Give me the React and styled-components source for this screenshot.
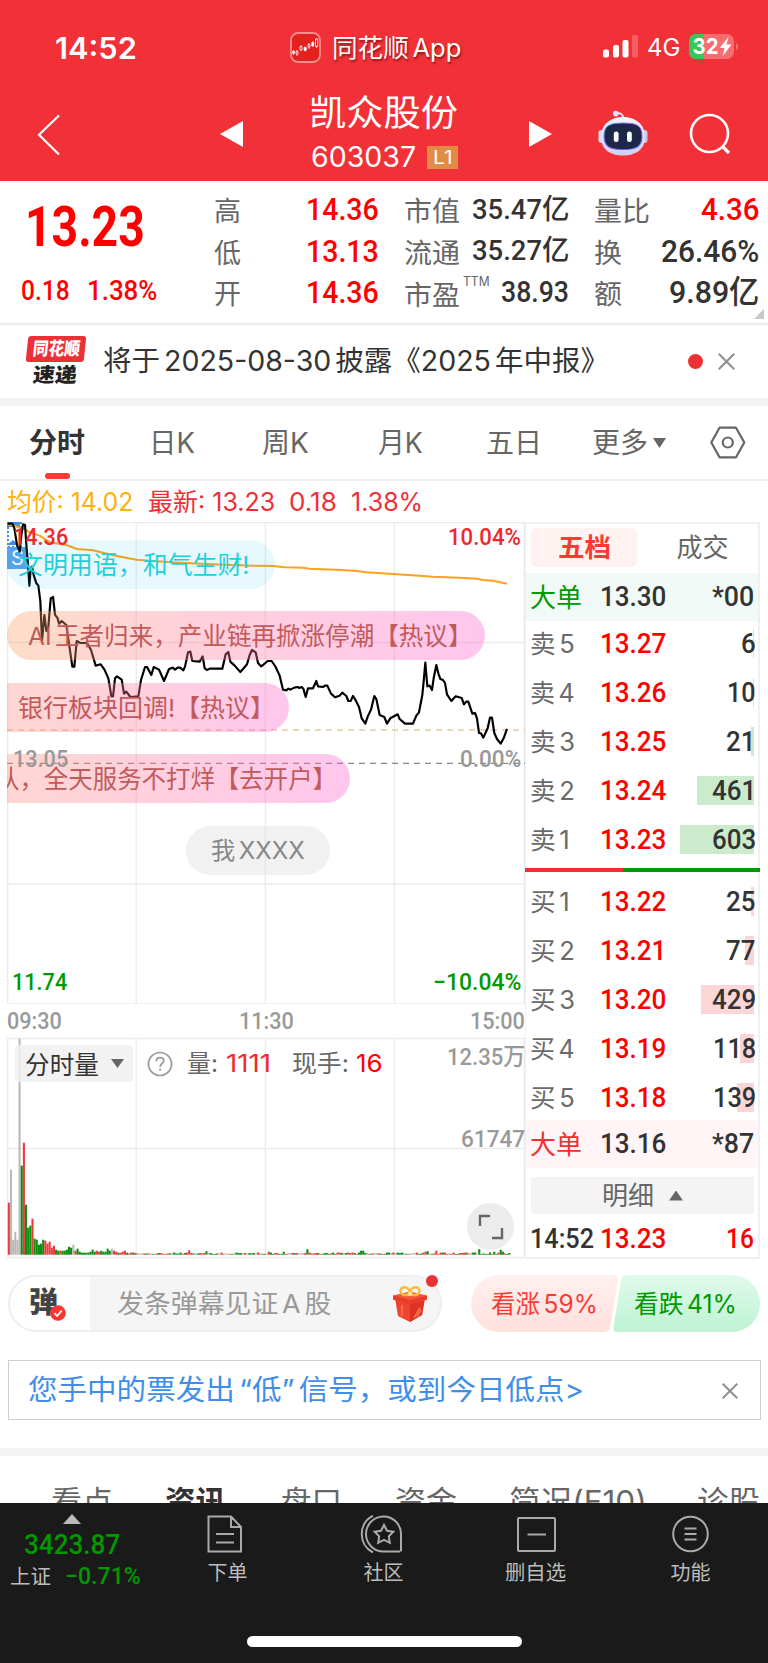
import React, { useLayoutEffect, useRef } from "react";
import styled, { createGlobalStyle, css } from "styled-components";

const UI = `Inter, "Noto Sans CJK SC", sans-serif`;
const NUM = `Roboto, "Noto Sans CJK SC", sans-serif`;
const RED = "#ff0000";
const GREEN = "#009900";

const GlobalStyle = createGlobalStyle`
  * { box-sizing: border-box; }
  body { margin: 0; background: #fff; font-family: ${UI}; color: #333; }
  svg { display: block; }
`;

/* ---------- text whose glyphs are condensed or widened to a given measure ---------- */
const FitBox = styled.span`
  display: block;
  flex: none;
  width: ${(p) => p.$w}px;
  height: ${(p) => p.$size * 1.2}px;
  line-height: 1.2;
  font-family: ${(p) => (p.$num ? NUM : UI)};
  font-size: ${(p) => p.$size}px;
  font-weight: ${(p) => p.$weight || 400};
  color: ${(p) => p.$color || "inherit"};
  margin-left: ${(p) => p.$ml || 0}px;
  margin-top: ${(p) => p.$mt || 0}px;
  text-shadow: ${(p) => p.$shadow || "none"};
  word-spacing: ${(p) => (p.$tight ? "-0.14em" : "normal")};
`;
const FitInner = styled.span`
  display: inline-block;
  white-space: pre;
  transform-origin: 0 50%;
`;
function Fit({ children, ...props }) {
  const ref = useRef(null);
  useLayoutEffect(() => {
    const fit = () => {
      const el = ref.current;
      if (el) el.style.transform = `scaleX(${props.$w / el.offsetWidth})`;
    };
    fit();
    document.fonts?.ready.then(fit);
  });
  return (
    <FitBox {...props}>
      <FitInner ref={ref}>{children}</FitInner>
    </FitBox>
  );
}

const Screen = styled.div`
  width: 768px;
  height: 1663px;
  overflow: hidden;
  display: flex;
  flex-direction: column;
  background: #fff;
`;

/* ---------- header ---------- */
const Header = styled.header`
  height: 181px;
  background: #f23037;
  color: #fff;
  flex: none;
`;
const StatusBar = styled.div`
  height: 94px;
  padding: 0 29px 0 55px;
  display: grid;
  grid-template-columns: 235px 1fr auto;
  align-items: center;
`;
const StatusGroup = styled.div`
  display: flex;
  align-items: center;
`;
const TitleBar = styled.div`
  height: 87px;
  display: grid;
  grid-template-columns: 220px 90px 148px 71px 68px 93px 1fr;
`;
const TitleCell = styled.div`
  padding-top: ${(p) => p.$pt}px;
  padding-left: ${(p) => p.$pl || 0}px;
`;
const CodeLine = styled.div`
  display: flex;
  align-items: center;
  margin-top: 6px;
`;
const Badge = styled.span`
  width: 33px;
  height: 23px;
  margin-left: 11px;
  background: #e08c45;
  display: flex;
  justify-content: center;
  align-items: center;
`;

/* ---------- quote ---------- */
const Quote = styled.section`
  height: 144px;
  flex: none;
  display: grid;
  grid-template-columns: 214px 165px 25px 165px 25px 165px 1fr;
  border-bottom: 2px solid #ececec;
`;
const PriceCell = styled.div`
  padding: 13px 0 0 25px;
`;
const ChangeLine = styled.div`
  display: flex;
  gap: 17px;
  margin: 14px 0 0 -4px;
`;
const Stats = styled.div`
  padding-top: 8px;
  display: grid;
  grid-template-rows: repeat(3, 41.3px);
`;
const Stat = styled.div`
  display: flex;
  align-items: center;
  justify-content: space-between;
`;
const StatName = styled.div`
  display: flex;
  padding-top: 6px;
`;
const Corner = styled.i`
  align-self: end;
  justify-self: start;
  width: 10px;
  height: 10px;
  margin: 0 0 4px -5px;
  background: #c8c8c8;
  clip-path: polygon(100% 0, 100% 100%, 0 100%);
`;

/* ---------- news ---------- */
const News = styled.section`
  height: 81px;
  flex: none;
  display: flex;
  align-items: center;
  padding: 0 33px 0 25px;
  border-bottom: 8px solid #f4f4f4;
`;
const NewsLogo = styled.div`
  width: 62px;
  height: 50px;
  margin: -2px 16px 0 0;
`;
const LogoTop = styled.div`
  width: 58px;
  height: 26px;
  margin-left: 2px;
  border-radius: 3px;
  background: #eb3136;
  transform: skewX(-6deg);
  display: flex;
  align-items: center;
  justify-content: center;
`;
const LogoBottom = styled.div`
  display: flex;
  padding-left: 8px;
  margin-top: 1px;
  transform: skewX(-6deg);
`;
const RedDot = styled.i`
  width: 15px;
  height: 15px;
  border-radius: 50%;
  background: #eb3136;
  margin: 0 15px 0 auto;
`;

/* ---------- period tabs ---------- */
const Tabs = styled.nav`
  height: 75px;
  flex: none;
  display: grid;
  grid-template-columns: 149px 113px 116px 108px 106px 118px 1fr;
  border-bottom: 2px solid #f0f0f0;
`;
const Tab = styled.div`
  position: relative;
  display: flex;
  align-items: center;
  gap: 5px;
  padding-top: ${(p) => (p.$icon ? 0 : 3)}px;
  padding-left: ${(p) => p.$pl || 0}px;
`;
const Indicator = styled.i`
  position: absolute;
  left: 45px;
  bottom: 0;
  width: 25px;
  height: 6px;
  border-radius: 3px;
  background: #fb3b33;
`;
const Down = styled.i`
  width: ${(p) => p.$w}px;
  height: ${(p) => p.$h}px;
  margin-top: ${(p) => p.$mt || 0}px;
  background: #666;
  clip-path: ${(p) => (p.$up ? "polygon(50% 0, 100% 100%, 0 100%)" : "polygon(0 0, 100% 0, 50% 100%)")};
`;
const Averages = styled.div`
  height: 41px;
  flex: none;
  display: flex;
  align-items: center;
  padding-left: 7px;
`;

/* ---------- market area ---------- */
const Market = styled.section`
  height: 737px;
  flex: none;
  display: grid;
  grid-template-columns: 518px 235px;
  padding-left: 7px;
`;
const Charts = styled.div`
  display: flex;
  flex-direction: column;
`;
const Plot = styled.div`
  position: relative;
  height: ${(p) => p.$h}px;
  flex: none;
  overflow: hidden;
  & > svg { position: absolute; left: 0; top: 0; }
`;
const PlotLabel = styled.div`
  position: absolute;
  top: ${(p) => p.$top}px;
  ${(p) => (p.$right !== undefined ? css`right: ${p.$right}px;` : css`left: ${p.$left}px;`)}
`;
const Bullet = styled.div`
  position: absolute;
  left: ${(p) => p.$x}px;
  top: ${(p) => p.$y}px;
  width: ${(p) => p.$w}px;
  height: 49px;
  border-radius: ${(p) => (p.$cut ? "0 25px 25px 0" : "25px")};
  background: ${(p) => p.$bg};
  display: flex;
  align-items: center;
  padding-top: 2px;
  padding-left: ${(p) => p.$pl || 0}px;
`;
const SellTag = styled.div`
  position: absolute;
  left: 0;
  top: 25px;
  width: 20px;
  height: 22px;
  background: #5b9fee;
  display: flex;
  align-items: center;
  padding-left: 4px;
`;
const TimeAxis = styled.div`
  height: 33px;
  flex: none;
  display: flex;
  align-items: center;
  justify-content: space-between;
  padding-top: 1px;
`;
const VolumeTools = styled.div`
  position: absolute;
  left: 8px;
  top: 8px;
  height: 37px;
  display: flex;
  align-items: center;
`;
const VolumeSelect = styled.div`
  width: 118px;
  height: 37px;
  border-radius: 4px;
  background: rgba(240, 240, 240, 0.85);
  display: flex;
  align-items: center;
  gap: 12px;
  padding-left: 10px;
  margin-right: 14px;
`;
const ExpandButton = styled.div`
  position: absolute;
  left: 460px;
  top: 166px;
  width: 47px;
  height: 47px;
  border-radius: 50%;
  background: #ececec;
  display: grid;
  place-items: center;
`;

/* ---------- order book ---------- */
const Book = styled.aside`
  border: 2px solid #f0f0f0;
  border-width: 2px 2px 2px 1px;
  display: flex;
  flex-direction: column;
`;
const BookTabs = styled.div`
  height: 49px;
  flex: none;
  display: flex;
  padding: 4px 0 0 5px;
`;
const BookTab = styled.div`
  width: ${(p) => p.$w}px;
  height: 39px;
  flex: none;
  border-radius: 5px;
  background: ${(p) => (p.$active ? "#fff2f1" : "transparent")};
  display: flex;
  align-items: center;
  justify-content: center;
  padding-top: 1px;
`;
const BookRow = styled.div`
  height: ${(p) => p.$h || 49}px;
  flex: none;
  display: grid;
  grid-template-columns: 70px 1fr auto;
  align-items: center;
  padding: 0 4px 0 ${(p) => p.$pl || 4}px;
  background: ${(p) => p.$bg || "transparent"};
`;
const Levels = styled.div`
  flex: none;
  height: 247px;
  margin-top: ${(p) => p.$mt}px;
  margin-bottom: ${(p) => p.$mb}px;
`;
const Qty = styled.div`
  width: 90px;
  height: 29px;
  display: flex;
  justify-content: flex-end;
  align-items: center;
  background: linear-gradient(${(p) => p.$c}, ${(p) => p.$c}) no-repeat right 2px top / ${(p) => p.$w}px 29px;
`;
const Split = styled.div`
  height: 4px;
  flex: none;
  margin-left: -1px;
  margin-right: -2px;
  background: linear-gradient(90deg, #f0302f 98px, ${GREEN} 98px);
`;
const DetailBar = styled.div`
  height: 37px;
  flex: none;
  margin: 9px 4px 8px 5px;
  background: #f4f4f4;
  display: flex;
  align-items: center;
  justify-content: center;
  gap: 15px;
`;

/* ---------- interaction ---------- */
const Actions = styled.section`
  height: 101px;
  flex: none;
  display: flex;
  align-items: flex-start;
  padding: 16px 8px 0;
`;
const DanmuInput = styled.div`
  position: relative;
  width: 434px;
  height: 57px;
  border: 2px solid #eeeeee;
  border-radius: 29px;
  background: linear-gradient(90deg, #fff 80px, #f5f5f5 80px);
  display: flex;
  align-items: center;
`;
const DanmuMark = styled.div`
  position: relative;
  width: 107px;
  padding-left: 19px;
  & > svg { position: absolute; left: 40px; top: 19px; }
`;
const GiftSlot = styled.span`
  margin-left: 61px;
`;
const GiftDot = styled.i`
  position: absolute;
  left: 416px;
  top: -2px;
  width: 12px;
  height: 12px;
  border-radius: 50%;
  background: #eb3136;
`;
const Votes = styled.div`
  position: relative;
  width: 289px;
  height: 57px;
  margin-left: 29px;
  display: flex;
  align-items: center;
  padding: 1px 0 0 20px;
  & > svg { position: absolute; left: 0; top: 0; }
  & > span { position: relative; }
`;
const Alert = styled.section`
  height: 60px;
  flex: none;
  margin: 0 7px 28px 8px;
  border: 1.5px solid #cfcfcf;
  display: flex;
  align-items: center;
  justify-content: space-between;
  padding: 1px 22px 0 19px;
`;
const InfoTabs = styled.nav`
  height: 55px;
  flex: none;
  border-top: 8px solid #f4f4f4;
  overflow: hidden;
  display: grid;
  grid-template-columns: 114px 116px 114px 114px 188px 1fr;
  padding: 27px 0 0 51px;
`;

/* ---------- footer ---------- */
const Footer = styled.footer`
  height: 160px;
  flex: none;
  background: #1a1a1a;
  color: #bdbdbd;
`;
const FooterNav = styled.div`
  height: 133px;
  display: grid;
  grid-template-columns: 145px 160px 152px 156px 1fr;
`;
const IndexCell = styled.div`
  display: flex;
  flex-direction: column;
  padding: 11px 0 0 10px;
`;
const Peak = styled.i`
  width: 18px;
  height: 10px;
  margin-left: 53px;
  background: #bbb;
  clip-path: polygon(50% 0, 100% 100%, 0 100%);
`;
const IndexLine = styled.div`
  display: flex;
  align-items: center;
  gap: 14px;
`;
const NavItem = styled.div`
  display: flex;
  flex-direction: column;
  align-items: center;
  gap: 8px;
  padding-top: 12px;
`;
const HomeBar = styled.div`
  width: 275px;
  height: 11px;
  border-radius: 6px;
  background: #fff;
  margin-left: 247px;
`;

/* ---------- data ---------- */
const PRICE =
  "24,26 38,26 44,40 52,90 60,110 65,60 70,28 76,30 80,90 85,150 89,212 93,160 97,155 102,180 110,205 116,212 122,260 127,378 134,300 140,348 146,335 153,250 160,246 166,300 173,308 178,326 186,318 200,330 207,380 218,455 224,455 231,378 242,384 262,384 274,405 288,452 303,448 314,463 326,490 335,544 340,544 346,490 352,484 366,494 373,536 380,530 392,546 416,544 424,495 436,456 442,456 455,480 462,456 478,464 493,498 508,462 520,458 526,464 534,458 541,458 551,466 556,455 565,412 572,410 578,438 600,440 609,424 615,460 622,465 630,461 668,461 678,418 686,411 692,440 705,452 722,471 732,460 742,448 750,420 757,405 768,412 775,444 784,454 790,450 804,438 816,438 828,456 840,482 850,524 860,526 866,521 872,524 884,518 894,516 898,519 906,516 911,521 918,546 925,520 940,520 950,498 955,514 970,516 976,512 983,512 994,536 1006,547 1020,542 1028,533 1040,543 1046,558 1053,558 1060,543 1066,552 1078,576 1086,610 1097,626 1104,605 1114,584 1124,543 1130,552 1140,600 1154,606 1162,626 1172,610 1194,598 1200,612 1216,626 1240,626 1250,602 1258,592 1268,540 1272,500 1277,443 1283,514 1290,512 1297,525 1302,490 1310,450 1316,475 1322,492 1330,495 1336,504 1342,538 1355,558 1368,544 1386,549 1393,568 1400,560 1406,560 1418,596 1426,594 1432,610 1438,654 1444,655 1451,668 1464,640 1471,608 1477,608 1484,654 1492,672 1503,686 1512,670 1522,642";
const AVERAGE =
  "24,28 70,40 90,52 120,62 150,82 200,90 232,102 280,106 340,121 410,134 470,139 540,143 640,148 760,152 820,153 855,157 910,158 930,161 1010,164 1065,167 1100,172 1180,177 1260,182 1300,185 1380,188 1430,191 1450,195 1480,197 1522,206";

const OPENING = [
  ["r", 52], ["x", 85], ["x", 15], ["x", 23], ["x", 15], ["x", 216], ["g", 89], ["r", 112], ["g", 50], ["g", 27], ["g", 29], ["r", 36],
  ["g", 16], ["g", 15], ["g", 10], ["g", 11], ["g", 15], ["r", 14], ["r", 11], ["r", 13], ["r", 7], ["r", 9], ["g", 5], ["g", 4],
  ["r", 4], ["g", 4], ["g", 4], ["g", 5], ["g", 8], ["g", 7], ["x", 10], ["r", 4], ["g", 6], ["g", 3], ["g", 2], ["g", 2],
  ["g", 2], ["g", 2], ["g", 3], ["g", 5], ["g", 3], ["r", 4], ["r", 3], ["g", 4], ["g", 3], ["g", 3], ["g", 6], ["g", 4],
  ["x", 6], ["r", 4], ["r", 3], ["g", 2], ["r", 2], ["r", 3], ["r", 4], ["g", 2],
];
const PEAKS = { 84: ["r", 4.5], 92: ["g", 3.5], 121: ["r", 3], 128: ["g", 3], 139: ["g", 5.5], 164: ["g", 4], 165: ["g", 4], 194: ["r", 3], 195: ["g", 3.5], 199: ["r", 4], 219: ["g", 5.5], 226: ["g", 3], 229: ["g", 5], 230: ["g", 3] };
const BARS = Array.from({ length: 234 }, (_, i) => {
  if (OPENING[i]) return OPENING[i];
  if (PEAKS[i]) return PEAKS[i];
  const n = (i * 37 + ((i * i) % 23)) % 11;
  return [n < 4 ? "r" : n < 9 ? "g" : "x", 0.8 + (n % 4) * 0.45];
});
const BAR_COLORS = { r: "#ee3a3c", g: "#0b8f12", x: "#b9b9b9" };

const SELLS = [
  ["5", "13.27", "6", 1],
  ["4", "13.26", "10", 1],
  ["3", "13.25", "21", 3],
  ["2", "13.24", "461", 57],
  ["1", "13.23", "603", 74],
];
const BUYS = [
  ["1", "13.22", "25", 3],
  ["2", "13.21", "77", 9],
  ["3", "13.20", "429", 53],
  ["4", "13.19", "118", 14],
  ["5", "13.18", "139", 17],
];

const Num = (p) => <Fit $num $weight={500} {...p} />;

function Cross({ s }) {
  return (
    <svg width={s} height={s} viewBox="0 0 16 16" fill="none" stroke="#909090" strokeWidth="2">
      <path d="M.7 .7 15.3 15.3M15.3 .7.7 15.3" />
    </svg>
  );
}

function Robot() {
  return (
    <svg width="50" height="46" viewBox="0 0 50 46">
      <defs>
        <linearGradient id="shell" x1="0" y1="0" x2="0" y2="1">
          <stop offset="0" stopColor="#f6f6ff" />
          <stop offset="1" stopColor="#cfcff2" />
        </linearGradient>
        <linearGradient id="rim" x1="0" y1="0" x2="1" y2="1">
          <stop offset="0" stopColor="#38b6f0" />
          <stop offset="0.5" stopColor="#9b4ff2" />
          <stop offset="1" stopColor="#4a5ff0" />
        </linearGradient>
      </defs>
      <path d="M18 3.500c5-1 7 1 7.500 5" fill="none" stroke="#e2e2f8" strokeWidth="1.800" />
      <circle cx="17.800" cy="3.600" r="2.800" fill="#e4e4fa" />
      <rect x="0.500" y="20" width="6" height="13" rx="3" fill="#d9d9f6" />
      <rect x="43.500" y="20" width="6" height="13" rx="3" fill="#c8c8ee" />
      <path d="M25 7C37 7 47 14 47 27S37 45.500 25 45.500 3 40 3 27 13 7 25 7z" fill="url(#shell)" />
      <path d="M25 13C38 13 44 15 44 26S38 39.500 25 39.500 6 37 6 26 12 13 25 13z" fill="#1d2748" stroke="url(#rim)" strokeWidth="1.100" />
      <rect x="15.800" y="21.500" width="4.800" height="10.500" rx="2.300" fill="#fff" />
      <rect x="29" y="21.500" width="4.800" height="10.500" rx="2.300" fill="#fff" />
    </svg>
  );
}

function Gift() {
  return (
    <svg width="36" height="36" viewBox="0 0 36 36">
      <path d="M3 12 18 7l15 5-3 17-12 7-12-6z" fill="#ef4430" />
      <path d="M18 17v19l12-7 2.500-15z" fill="#dd3325" />
      <path d="M1 9.500 18 5.500 35 9.500v4L18 18.500 1 13.500z" fill="#f3573c" />
      <path d="m1 9.500 17 4.500 17-4.500v4L18 18.500 1 13.500z" fill="#e63c28" />
      <path d="M10 19v11M22 32l6-10M25 31l4-7" stroke="#f57a50" strokeWidth="1.500" />
      <g fill="none" stroke="#f8bd3c" strokeWidth="2.600">
        <ellipse cx="13" cy="5.200" rx="4.500" ry="3.800" transform="rotate(20 13 5.200)" />
        <ellipse cx="23" cy="5.200" rx="4.500" ry="3.800" transform="rotate(-20 23 5.200)" />
      </g>
      <circle cx="18" cy="8" r="2.300" fill="#ffe08a" />
    </svg>
  );
}

function Battery() {
  return (
    <svg width="50" height="25" viewBox="0 0 50 25">
      <clipPath id="battery"><rect width="45" height="25" rx="7" /></clipPath>
      <g clipPath="url(#battery)">
        <rect width="45" height="25" fill="#f76c70" />
        <rect width="14.500" height="25" fill="#34c759" />
      </g>
      <path d="M47 9c3 1 3 6 0 7z" fill="#f76c70" />
      <path d="M39.500 3 30.500 14h5l-2 8.500 9-12h-5z" fill="#fff" />
      <text x="3.500" y="20.300" fontFamily="Inter" fontWeight="700" fontSize="22" fill="#fff" textLength="26" lengthAdjust="spacingAndGlyphs">32</text>
    </svg>
  );
}

function StatusAndTitle() {
  return (
    <Header>
      <StatusBar>
        <Fit $w={82} $size={30} $weight={600} $mt={1}>14:52</Fit>
        <StatusGroup>
          <svg width="31" height="31" viewBox="0 0 31 31">
            <rect x="1" y="1" width="29" height="29" rx="7" fill="#e3211f" stroke="#f98d8e" strokeWidth="1.800" />
            <g stroke="#fff" fill="#fff">
              <path d="M3.500 18v5M7 18v6M11 13v6M15 14.500v5M19 11v6M22.800 9v6M26.500 6v10" strokeWidth=".7" />
              <path d="M2.500 19h2v2.500h-2zM14 15.500h2.400v3H14zM21.700 10.500h2v3.500h-2z" strokeWidth=".5" />
              <path d="M6 19.500h2V22H6zM10 14.500h2V18h-2zM18 12.500h2V15h-2zM25.500 7h2.200v7.500h-2.200z" fill="#e3211f" strokeWidth=".8" />
            </g>
          </svg>
          <Fit $tight $w={129} $size={25} $ml={11} $mt={1} $shadow="1px 2px 2px rgba(80,0,0,.6)">同花顺 App</Fit>
        </StatusGroup>
        <StatusGroup>
          <svg width="36" height="23" viewBox="0 0 36 23">
            <rect x="0" y="14.500" width="6" height="8" rx="2" fill="#fff" />
            <rect x="10" y="10" width="6" height="12.500" rx="2" fill="#fff" />
            <rect x="19.500" y="5" width="6" height="17.500" rx="2" fill="#fff" />
            <rect x="29" y="0" width="6" height="22.500" rx="2" fill="#f75e63" />
          </svg>
          <Fit $w={33} $size={24} $ml={8} $mt={2}>4G</Fit>
          <Fit as="span" $w={9} $size={1} />
          <Battery />
        </StatusGroup>
      </StatusBar>
      <TitleBar>
        <TitleCell $pt={20} $pl={37}>
          <svg width="24" height="42" viewBox="0 0 24 42" fill="none" stroke="#fff" strokeWidth="2.200"><path d="M22 1.500 2 20.800 22 40.500" /></svg>
        </TitleCell>
        <TitleCell $pt={27}>
          <svg width="23" height="26" viewBox="0 0 23 26"><path d="M23 0v26L0 13z" fill="#fff" /></svg>
        </TitleCell>
        <TitleCell $pt={-1}>
          <Fit $w={149} $size={36} $mt={-2} $ml={-1}>凯众股份</Fit>
          <CodeLine>
            <Fit $w={105} $size={28} $ml={1}>603037</Fit>
            <Badge><Fit $w={20} $size={18}>L1</Fit></Badge>
          </CodeLine>
        </TitleCell>
        <TitleCell $pt={27} $pl={71}>
          <svg width="23" height="26" viewBox="0 0 23 26"><path d="M0 0v26L23 13z" fill="#fff" /></svg>
        </TitleCell>
        <TitleCell $pt={16} $pl={69}><Robot /></TitleCell>
        <TitleCell $pt={19} $pl={92}>
          <svg width="43" height="43" viewBox="0 0 43 43" fill="none" stroke="#fff" strokeWidth="2.600"><circle cx="20.500" cy="20.500" r="18.500" /><path d="m33 33 7 7" strokeWidth="3.200" /></svg>
        </TitleCell>
      </TitleBar>
    </Header>
  );
}

const name = { $size: 27, $color: "#666" };

function QuotePanel() {
  return (
    <Quote>
      <PriceCell>
        <Fit $num $w={120} $size={56} $weight={700} $color={RED}>13.23</Fit>
        <ChangeLine>
          <Num $w={49} $size={27} $color={RED}>0.18</Num>
          <Num $w={70} $size={27} $color={RED}>1.38%</Num>
        </ChangeLine>
      </PriceCell>
      <Stats>
        {[["高", "14.36"], ["低", "13.13"], ["开", "14.36"]].map(([k, v]) => (
          <Stat key={k}>
            <StatName><Fit $w={27} {...name}>{k}</Fit></StatName>
            <Num $w={73} $size={32} $color={RED}>{v}</Num>
          </Stat>
        ))}
      </Stats>
      <span />
      <Stats>
        <Stat><StatName><Fit $w={56} {...name}>市值</Fit></StatName><Num $w={97} $size={28}>35.47亿</Num></Stat>
        <Stat><StatName><Fit $w={56} {...name}>流通</Fit></StatName><Num $w={97} $size={28}>35.27亿</Num></Stat>
        <Stat>
          <StatName><Fit $w={56} $mt={1} {...name}>市盈</Fit><Fit $w={27} $size={13} $color="#666" $ml={3} $mt={-5}>TTM</Fit></StatName>
          <Num $w={68} $size={29}>38.93</Num>
        </Stat>
      </Stats>
      <span />
      <Stats>
        <Stat><StatName><Fit $w={56} {...name}>量比</Fit></StatName><Num $w={58} $size={32} $color={RED}>4.36</Num></Stat>
        <Stat><StatName><Fit $w={28} {...name}>换</Fit></StatName><Num $w={98} $size={32}>26.46%</Num></Stat>
        <Stat><StatName><Fit $w={28} {...name}>额</Fit></StatName><Num $w={90} $size={32}>9.89亿</Num></Stat>
      </Stats>
      <Corner />
    </Quote>
  );
}

function NewsPanel() {
  return (
    <News>
      <NewsLogo>
        <LogoTop><Fit $w={47} $size={18} $weight={900} $color="#fff">同花顺</Fit></LogoTop>
        <LogoBottom><Fit $w={44} $size={20} $weight={900} $color="#222">速递</Fit></LogoBottom>
      </NewsLogo>
      <Fit $tight $w={506} $size={28} $mt={1}>将于 2025-08-30 披露《2025 年中报》</Fit>
      <RedDot />
      <Cross s={17} />
    </News>
  );
}

function PeriodTabs() {
  const t = { $size: 28, $color: "#666" };
  return (
    <Tabs>
      <Tab $pl={29}><Fit $w={56} $size={28} $weight={700}>分时</Fit><Indicator /></Tab>
      <Tab><Fit $w={46} {...t}>日K</Fit></Tab>
      <Tab><Fit $w={47} {...t}>周K</Fit></Tab>
      <Tab><Fit $w={45} {...t}>月K</Fit></Tab>
      <Tab><Fit $w={56} {...t}>五日</Fit></Tab>
      <Tab><Fit $w={56} {...t}>更多</Fit><Down $w={13} $h={10} $mt={-2} /></Tab>
      <Tab $icon>
        <svg width="36" height="33" viewBox="0 0 36 33" fill="none" stroke="#666" strokeWidth="2.200">
          <path d="M9.500 1.700h16.500l8.300 14.800L26 31.300H9.500L1.300 16.500z" strokeLinejoin="round" />
          <circle cx="17.800" cy="16.500" r="5" />
        </svg>
      </Tab>
    </Tabs>
  );
}

function PriceChart() {
  return (
    <Plot $h={482}>
      <svg width="518" height="483" viewBox="0 0 518 483">
        <g stroke="#ebebeb" strokeWidth="1.300" fill="none">
          <path d="M.7 .7H517.300V482H.7zM129.200 0V482M258.300 0V482M387.500 0V482M0 120.500H518M0 362H518" />
        </g>
        <path d="M0 208H518" stroke="#ecc9a0" strokeWidth="1.500" strokeDasharray="6 5" />
        <path d="M0 241.300H518" stroke="#888" strokeWidth="1.300" strokeDasharray="6 5" />
        <rect x="1" y="1" width="13" height="24" fill="#fff" stroke="#3b8ee8" strokeWidth="2" strokeDasharray="2 2" />
        <rect x="0" y="0" width="13" height="5" fill="#3b8ee8" />
        <path d="M0 23h12l-6 -5z" fill="#3b8ee8" />
      </svg>
      <SellTag><Fit $w={13} $size={20} $color="#fff">S</Fit></SellTag>
      <svg width="518" height="483" viewBox="0 0 518 483">
        <g transform="translate(-7.300 -7) scale(.3333)" fill="none" strokeLinejoin="round">
          <polyline points={AVERAGE} stroke="#ffa01e" strokeWidth="6" />
          <polyline points={PRICE} stroke="#000" strokeWidth="6.500" />
        </g>
      </svg>
      <Bullet $x={0} $y={18} $w={268} $pl={11} $bg="rgba(0,195,220,.095)">
        <Fit $w={232} $size={24.5} $color="#1fd0dc">文明用语，和气生财!</Fit>
      </Bullet>
      <Bullet $x={0} $y={89} $w={478} $pl={21} $bg="linear-gradient(100deg, rgba(250,160,95,.35), rgba(255,121,150,.35) 38%, rgba(255,92,206,.35))">
        <Fit $tight $w={444} $size={24.5} $color="#c15a5b">AI 王者归来，产业链再掀涨停潮【热议】</Fit>
      </Bullet>
      <Bullet $cut $x={0} $y={161} $w={282} $pl={11} $bg="linear-gradient(100deg, rgba(255,140,125,.35), rgba(255,115,165,.35) 55%, rgba(255,92,206,.35))">
        <Fit $w={257} $size={24.5} $color="#c15a5b">银行板块回调!【热议】</Fit>
      </Bullet>
      <Bullet $cut $x={0} $y={232} $w={343} $bg="linear-gradient(100deg, rgba(255,140,125,.35), rgba(255,115,165,.35) 50%, rgba(255,92,206,.35))">
        <Fit $w={342} $size={24.5} $ml={-12} $color="#c15a5b">队，全天服务不打烊【去开户】</Fit>
      </Bullet>
      <Bullet $x={179} $y={304} $w={144} $pl={25} $bg="rgba(225,225,225,.45)">
        <Fit $tight $w={94} $size={24} $color="#888">我 XXXX</Fit>
      </Bullet>
      <PlotLabel $left={6} $top={1}><Num $w={55} $size={24} $color="#f0282d">14.36</Num></PlotLabel>
      <PlotLabel $right={4} $top={1}><Num $w={73} $size={24} $color="#f0282d">10.04%</Num></PlotLabel>
      <PlotLabel $left={6} $top={223}><Num $w={55} $size={24} $color="#999">13.05</Num></PlotLabel>
      <PlotLabel $right={4} $top={223}><Num $w={61} $size={24} $color="#999">0.00%</Num></PlotLabel>
      <PlotLabel $left={5} $top={446}><Num $w={55} $size={24} $color={GREEN}>11.74</Num></PlotLabel>
      <PlotLabel $right={4} $top={446}><Num $w={88} $size={24} $color={GREEN}>−10.04%</Num></PlotLabel>
    </Plot>
  );
}

function VolumeChart() {
  return (
    <Plot $h={222}>
      <svg width="518" height="222" viewBox="0 0 518 222">
        <path d="M.7 1.500H517.300V220.500H.7zM129.200 1V220M258.300 1V220M387.500 1V220M0 111.500H518" stroke="#ebebeb" strokeWidth="1.300" fill="none" />
        {BARS.map(([c, h], i) => (
          <rect key={i} x={0.8 + i * 2.148} y={217.700 - h} width="2.100" height={h} fill={BAR_COLORS[c]} />
        ))}
      </svg>
      <VolumeTools>
        <VolumeSelect><Fit $w={74} $size={25} $mt={2}>分时量</Fit><Down $w={13} $h={9} /></VolumeSelect>
        <svg width="26" height="26" viewBox="0 0 26 26" fill="none" stroke="#999" strokeWidth="1.700">
          <circle cx="13" cy="13" r="11.500" />
          <path d="M9.300 10.200c0-2 1.500-3.500 3.700-3.500s3.700 1.400 3.700 3.300c0 2.800-3.600 2.700-3.600 5.700M13.100 17.500v2.200" />
        </svg>
        <Fit $w={31} $size={24} $ml={14} $mt={2} $color="#666">量:</Fit>
        <Fit $w={45} $size={24} $ml={8} $mt={2} $color="#ee2b30">1111</Fit>
        <Fit $w={57} $size={24} $ml={21} $mt={2} $color="#666">现手:</Fit>
        <Fit $w={27} $size={24} $ml={7} $mt={2} $color={RED}>16</Fit>
      </VolumeTools>
      <PlotLabel $right={0} $top={6}><Num $w={78} $size={24} $color="#999">12.35万</Num></PlotLabel>
      <PlotLabel $right={0} $top={88}><Num $w={64} $size={24} $color="#999">61747</Num></PlotLabel>
      <ExpandButton>
        <svg width="26" height="26" viewBox="0 0 26 26" fill="none" stroke="#666" strokeWidth="2.400"><path d="M2 12V2h10M24 14v10H14" /></svg>
      </ExpandButton>
    </Plot>
  );
}

const qtyWidth = (s) => s.length * 14.8 - (s.startsWith("1") ? 1 : 0);

function Level({ side, row: [n, price, qty, bar], color }) {
  return (
    <BookRow $pl={4}>
      <Fit $tight $w={n === "1" ? 40 : 45} $size={25} $color="#6a6a6a">{side} {n}</Fit>
      <Num $w={66} $size={28} $color={RED}>{price}</Num>
      <Qty $c={color} $w={bar}><Num $w={qtyWidth(qty)} $size={28}>{qty}</Num></Qty>
    </BookRow>
  );
}

function OrderBook() {
  return (
    <Book>
      <BookTabs>
        <BookTab $active $w={106}><Fit $w={53} $size={26} $weight={700} $color="#fb3b33">五档</Fit></BookTab>
        <BookTab $w={131}><Fit $w={52} $size={26} $color="#666">成交</Fit></BookTab>
      </BookTabs>
      <BookRow $h={48} $bg="#f1faf6">
        <Fit $w={52} $size={26} $color={GREEN} $mt={1}>大单</Fit>
        <Num $w={66} $size={28}>13.30</Num>
        <Num $w={42} $size={28}>*00</Num>
      </BookRow>
      <Levels $mt={-2} $mb={2}>
        {SELLS.map((r) => <Level key={r[0]} side="卖" row={r} color="#cceacc" />)}
      </Levels>
      <Split />
      <Levels $mt={5} $mb={-4}>
        {BUYS.map((r) => <Level key={r[0]} side="买" row={r} color="#fcd5d6" />)}
      </Levels>
      <BookRow $h={48} $bg="#fff5f6">
        <Fit $w={52} $size={26} $color="#f0302f" $mt={1}>大单</Fit>
        <Num $w={66} $size={28}>13.16</Num>
        <Num $w={42} $size={28}>*87</Num>
      </BookRow>
      <DetailBar><Fit $w={52} $size={26} $color="#666">明细</Fit><Down $up $w={14} $h={10} /></DetailBar>
      <BookRow $h={34} $pl={4}>
        <Num $w={64} $size={28}>14:52</Num>
        <Num $w={66} $size={28} $color={RED}>13.23</Num>
        <Num $w={28} $size={28} $color={RED}>16</Num>
      </BookRow>
    </Book>
  );
}

function ActionBar() {
  return (
    <Actions>
      <DanmuInput>
        <DanmuMark>
          <Fit $w={29} $size={29} $weight={900} $color="#444">弹</Fit>
          <svg width="16" height="16" viewBox="0 0 16 16"><circle cx="8" cy="8" r="7.800" fill="#f9362f" /><path d="m4.500 8.200 2.600 2.800 4.600-5.400" fill="none" stroke="#fff" strokeWidth="1.800" /></svg>
        </DanmuMark>
        <Fit $tight $w={214} $size={26} $mt={1} $color="#999">发条弹幕见证 A 股</Fit>
        <GiftSlot><Gift /></GiftSlot>
        <GiftDot />
      </DanmuInput>
      <Votes>
        <svg width="289" height="57" viewBox="0 0 289 57">
          <defs>
            <linearGradient id="up" x1="0" y1="0" x2="0" y2="1"><stop offset="0" stopColor="#fff0ef" /><stop offset="1" stopColor="#ffe0dd" /></linearGradient>
            <linearGradient id="dn" x1="0" y1="0" x2="0" y2="1"><stop offset="0" stopColor="#e1faec" /><stop offset="1" stopColor="#bdf2d3" /></linearGradient>
          </defs>
          <path d="M28.500 0H143q4.500 0 4 4.500L139 52q-1 5-6 5H28.500a28.500 28.500 0 0 1 0-57z" fill="url(#up)" />
          <path d="M260.500 0H156q-5 0-5.800 5L142.500 52q-.8 5 4 5H260.500a28.500 28.500 0 0 0 0-57z" fill="url(#dn)" />
        </svg>
        <Fit $tight $w={107} $size={25} $color="#fb3b33">看涨 59%</Fit>
        <Fit $tight $w={103} $size={25} $ml={36} $color={GREEN}>看跌 41%</Fit>
      </Votes>
    </Actions>
  );
}

function BottomNav() {
  const icon = { width: 44, height: 38, viewBox: "0 0 44 38", fill: "none", stroke: "#aaa", strokeWidth: 2 };
  return (
    <Footer>
      <FooterNav>
        <IndexCell>
          <Peak />
          <Num $w={96} $size={28} $ml={14} $mt={4} $color={GREEN}>3423.87</Num>
          <IndexLine><Fit $w={41} $size={20} $mt={2}>上证</Fit><Num $w={76} $size={24} $color={GREEN}>−0.71%</Num></IndexLine>
        </IndexCell>
        <NavItem>
          <svg {...icon}><path d="M5.500 1.500H28L38 12V36.500H5.500zM28 1.500V12H38M13 19H31M13 27.500H31" /></svg>
          <Fit $w={40} $size={20} $ml={5}>下单</Fit>
        </NavItem>
        <NavItem>
          <svg {...icon}>
            <path d="M41 36.500H25a17.500 17.500 0 1 1 17-17.500V36.500M14 .8C-1 8-1 30 14 37.500" />
            <path d="m25 10 3 5.800 6.300 1-4.500 4.500 1 6.500-5.800-3-5.800 3 1-6.500-4.500-4.500 6.300-1z" />
          </svg>
          <Fit $w={40} $size={20} $ml={5}>社区</Fit>
        </NavItem>
        <NavItem>
          <svg {...icon}><rect x="5" y="3" width="37" height="33" rx="1" /><path d="M14.500 19.500H33" /></svg>
          <Fit $w={61} $size={20}>删自选</Fit>
        </NavItem>
        <NavItem>
          <svg {...icon}><circle cx="21.500" cy="19" r="17.300" /><path d="M15.500 13.500H27.500M15.500 19H27.500M15.500 24.500H27.500" /></svg>
          <Fit $w={40} $size={20}>功能</Fit>
        </NavItem>
      </FooterNav>
      <HomeBar />
    </Footer>
  );
}

export default function App() {
  const t = { $size: 30, $color: "#666" };
  return (
    <Screen>
      <GlobalStyle />
      <StatusAndTitle />
      <QuotePanel />
      <NewsPanel />
      <PeriodTabs />
      <Averages>
        <Fit $w={126} $size={25} $color="#ffb10b">均价: 14.02</Fit>
        <Fit $w={127} $size={25} $ml={15} $color="#ee3035">最新: 13.23</Fit>
        <Fit $w={48} $size={25} $ml={14} $color="#ee3035">0.18</Fit>
        <Fit $w={72} $size={25} $ml={14} $color="#ee3035">1.38%</Fit>
      </Averages>
      <Market>
        <Charts>
          <PriceChart />
          <TimeAxis>
            <Num $w={55} $size={24} $color="#999">09:30</Num>
            <Num $w={55} $size={24} $color="#999">11:30</Num>
            <Num $w={55} $size={24} $color="#999">15:00</Num>
          </TimeAxis>
          <VolumeChart />
        </Charts>
        <OrderBook />
      </Market>
      <ActionBar />
      <Alert>
        <Fit $tight $w={556} $size={28} $mt={1} $color="#3e8eea">您手中的票发出 “低” 信号，或到今日低点&gt;</Fit>
        <Cross s={16} />
      </Alert>
      <InfoTabs>
        <Fit $w={62} {...t}>看点</Fit>
        <Fit $w={61} {...t} $weight={700} $color="#333">资讯</Fit>
        <Fit $w={61} {...t}>盘口</Fit>
        <Fit $w={62} {...t}>资金</Fit>
        <Fit $w={138} {...t}>简况(F10)</Fit>
        <Fit $w={63} {...t}>诊股</Fit>
      </InfoTabs>
      <BottomNav />
    </Screen>
  );
}
